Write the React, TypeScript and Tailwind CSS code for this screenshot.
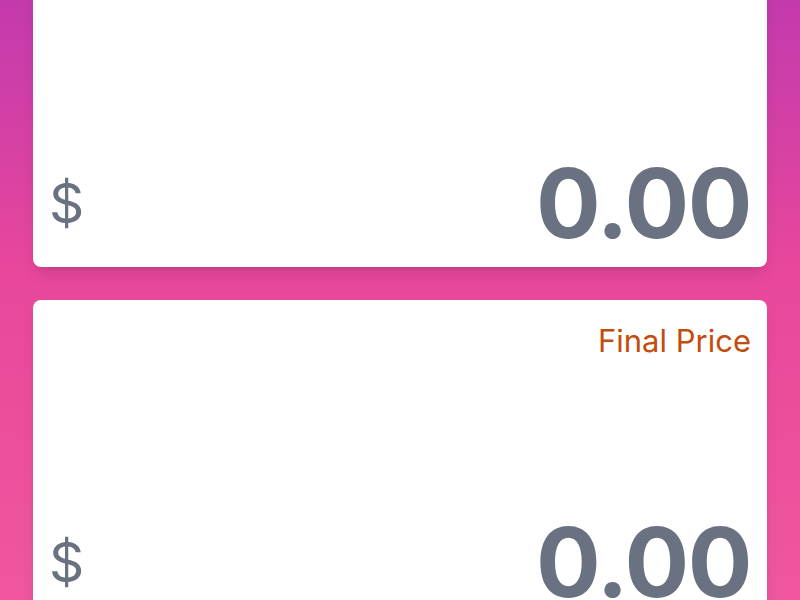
import React from 'react';

// Price card: label on top, "$ amount" row pinned to the bottom
const PriceCard: React.FC<{ label: string; amount: string }> = ({ label, amount }) => {
  return (
    <div className="bg-white rounded-lg shadow-lg p-4 h-[326px] flex flex-col justify-between">
      <div className="mt-[7px] text-right text-[31px] text-[#c24d0c] leading-9">{label}</div>
      <div className="flex items-center justify-between text-gray-500">
        <span className="text-[55px] leading-none">$</span>
        <span className="text-8xl font-bold leading-none tracking-[-0.015em]">{amount}</span>
      </div>
    </div>
  );
};

const App: React.FC = () => {
  return (
    <div
      className="h-screen overflow-hidden bg-[linear-gradient(to_bottom,#c33aae_0%,#e8479b_45%,#f0579f_100%)] px-[33px]"
      style={{ fontFamily: 'Inter, "Noto Sans", sans-serif' }}
    >
      <div className="-mt-[59px] flex flex-col gap-[33px]">
        <PriceCard label="Original Price" amount="0.00" />
        <PriceCard label="Final Price" amount="0.00" />
      </div>
    </div>
  );
};

export default App;
